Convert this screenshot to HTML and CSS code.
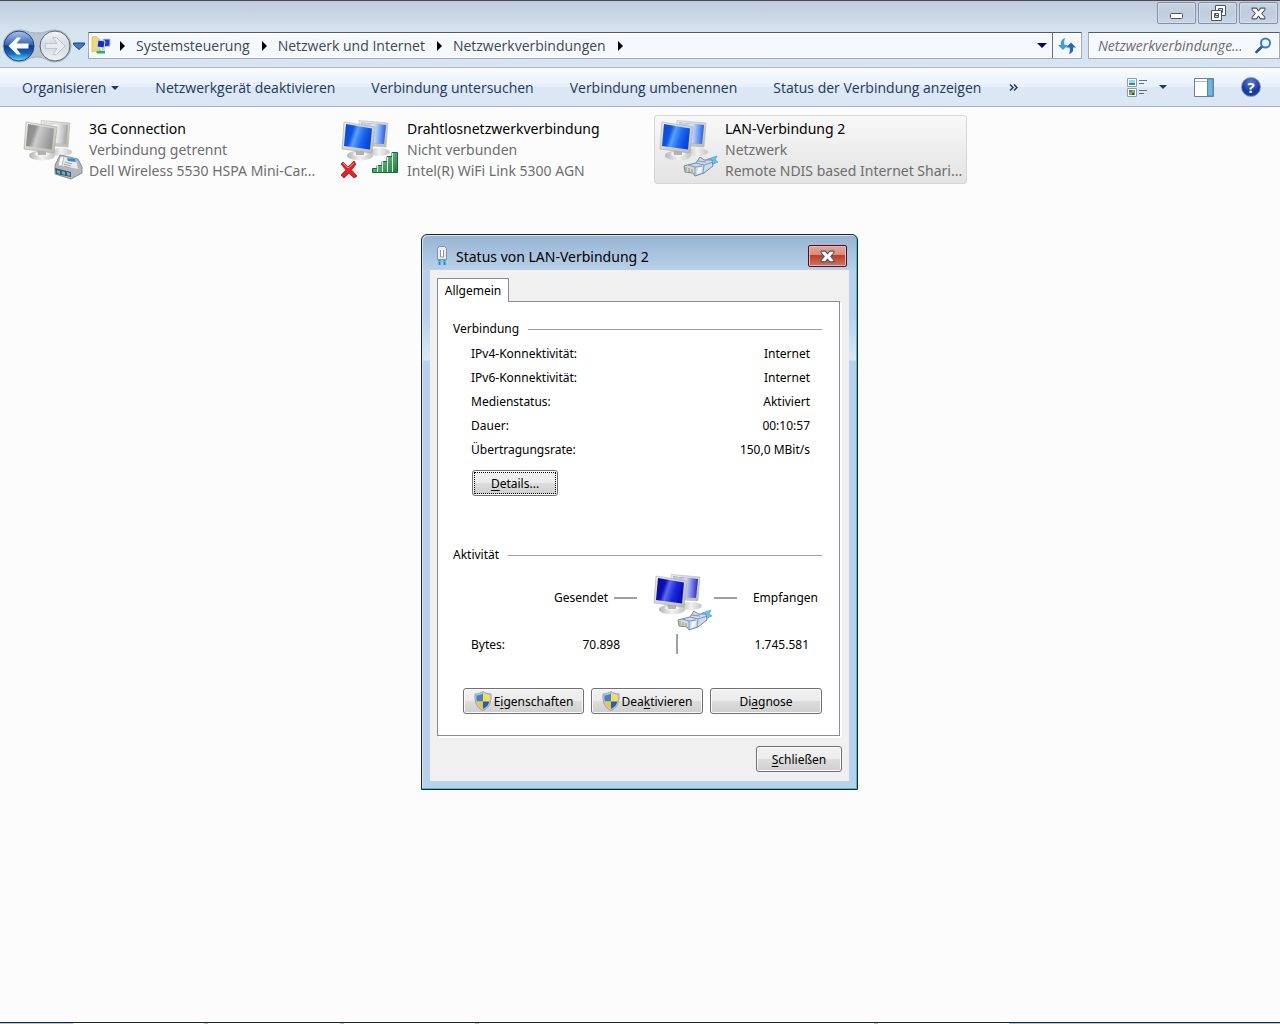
FILE: index.html
```html
<!DOCTYPE html>
<html lang="de">
<head>
<meta charset="UTF-8" />
<meta name="viewport" content="width=device-width, initial-scale=1" />
<title>Netzwerkverbindungen</title>
<link rel="stylesheet" href="styles.css">
</head>
<body>

<!-- Symbole, die mehrfach verwendet werden -->
<svg class="defs" width="0" height="0" aria-hidden="true">
  <defs>
    <linearGradient id="screen-blue" x1="0" y1="0" x2="1" y2=".3">
      <stop offset="0" stop-color="#1244c4" /><stop offset=".35" stop-color="#0f56e4" /><stop offset=".5" stop-color="#5aa0fa" /><stop offset=".75" stop-color="#1c68f0" /><stop offset="1" stop-color="#0846dc" />
    </linearGradient>
    <linearGradient id="screen-navy" x1="0" y1="0" x2="1" y2=".3">
      <stop offset="0" stop-color="#0a0f8c" /><stop offset=".35" stop-color="#0c12b0" /><stop offset=".5" stop-color="#5a6af0" /><stop offset=".75" stop-color="#1c28d8" /><stop offset="1" stop-color="#0a10bc" />
    </linearGradient>
    <linearGradient id="screen-gray" x1="0" y1="0" x2="1" y2=".3">
      <stop offset="0" stop-color="#868686" /><stop offset=".35" stop-color="#949494" /><stop offset=".5" stop-color="#cccccc" /><stop offset="1" stop-color="#969696" />
    </linearGradient>
    <linearGradient id="shine" x1="0" y1="0" x2="1" y2="0">
      <stop offset=".5" stop-color="#fff" stop-opacity=".75" /><stop offset="1" stop-color="#fff" stop-opacity=".1" />
    </linearGradient>
    <linearGradient id="frame" x1="0" y1="0" x2="1" y2="1">
      <stop offset="0" stop-color="#f0f0ec" /><stop offset="1" stop-color="#b9b8b2" />
    </linearGradient>
    <linearGradient id="base" x1="0" y1="0" x2="1" y2="0">
      <stop offset="0" stop-color="#b4b4b4" /><stop offset=".5" stop-color="#f2f2f2" /><stop offset="1" stop-color="#c4c4c4" />
    </linearGradient>
    <linearGradient id="green" x1="0" y1="0" x2="1" y2="1">
      <stop offset="0" stop-color="#8fd0a0" /><stop offset="1" stop-color="#1f7a40" />
    </linearGradient>
    <linearGradient id="ball" x1="0" y1="0" x2="0" y2="1">
      <stop offset="0" stop-color="#a9c4ea" /><stop offset=".45" stop-color="#3a68b8" /><stop offset=".5" stop-color="#0a3a90" /><stop offset=".75" stop-color="#1668c0" /><stop offset="1" stop-color="#5fe4fc" />
    </linearGradient>
    <linearGradient id="ball-off" x1="0" y1="0" x2="0" y2="1">
      <stop offset="0" stop-color="#f2f5f9" /><stop offset=".5" stop-color="#d3dae3" /><stop offset="1" stop-color="#f0f3f7" />
    </linearGradient>

    <symbol id="monitors" viewBox="0 0 60 60">
      <ellipse cx="39" cy="34" rx="11" ry="4" fill="url(#base)" />
      <path d="M19 2.500L48 5L46 29L20 27Z" fill="url(#frame)" stroke="#b5b5b0" stroke-width=".6" />
      <path d="M21 4.500L46 7L44 26L22 24Z" />
      <path d="M21 4.500L46 7L44 26L22 24Z" fill="url(#shine)" />
      <ellipse cx="20" cy="37.500" rx="13" ry="5" fill="url(#base)" />
      <ellipse cx="20" cy="36" rx="7" ry="2.500" fill="#f4f4f4" />
      <path d="M15 30L24 32L24 37L16 37Z" fill="#b2b2b2" />
      <path d="M4 4L35 9L32 35L2 31Z" fill="url(#frame)" stroke="#a7a7a2" stroke-width=".6" />
      <path d="M6 6L32 10.500L30 31.500L4 28Z" />
    </symbol>

    <symbol id="cable" viewBox="0 0 60 60">
      <path d="M45 45L50 41L59 38L57 42L60 44L53 47Z" fill="#6cc4e2" stroke="#3fa3cb" stroke-width=".7" />
      <path d="M26 48L38 45L42 39L46 42L54 42L55 48L46 55L37 58L35 55L27 54Z" fill="#cfdaeb" stroke="#6f87ab" />
      <path d="M38 45L46 47L55 44M46 47L45 55M39 43L48 44M30 47L37 49L37 57M37 49L44 48" fill="none" stroke="#8196b8" />
      <path d="M28 49V53M31 50V54M34 51V55" stroke="#b6b24c" stroke-width="1.500" />
      <path d="M40 50L44 49L43 54L39 56Z" fill="#f3f7fc" />
    </symbol>

    <symbol id="shield" viewBox="0 0 18 20">
      <path d="M9 .500C11 2 14 3 17 3C17.500 11 15.500 16.500 9 19.500C2.500 16.500 .500 11 1 3C4 3 7 2 9 .500Z" fill="#c9ced4" stroke="#8b949e" stroke-width=".8" />
      <path d="M9 2.500V10.500H2.700C2.300 8 2.400 6 2.500 4.300C5 4.200 7 3.600 9 2.500Z" fill="#3b86cc" />
      <path d="M9 2.500V10.500H15.300C15.700 8 15.600 6 15.500 4.300C13 4.200 11 3.600 9 2.500Z" fill="#fbdc53" />
      <path d="M2.700 10.500H9V18C5.500 16.300 3.400 14 2.700 10.500Z" fill="#f2c63a" />
      <path d="M15.300 10.500H9V18C12.500 16.300 14.600 14 15.300 10.500Z" fill="#1d62b4" />
    </symbol>

    <symbol id="cross" viewBox="0 0 14 12">
      <path d="M1 1H5L7 3.500L9 1H13V2.500L10 6L13 9.500V11H9L7 8.500L5 11H1V9.500L4 6L1 2.500Z" fill="#fff" stroke="#4d5468" stroke-linejoin="round" />
    </symbol>
  </defs>
</svg>

<div class="window">
  <header class="glass">
    <div class="window-controls">
      <button aria-label="Minimieren">
        <svg width="13" height="12"><rect x=".5" y="6.500" width="12" height="5" rx="1" fill="#fff" stroke="#4d5468" /></svg>
      </button>
      <button aria-label="Verkleinern">
        <svg width="16" height="16" fill="#fff" stroke="#4d5468"><path d="M5.500 .500H15.500V10.500H5.500ZM8.500 3.500V7.500H12.500V3.500Z" fill-rule="evenodd" /><path d="M1.500 5.500H11.500V15.500H1.500ZM4.500 8.500V12.500H8.500V8.500Z" fill-rule="evenodd" /></svg>
      </button>
      <button aria-label="Fenster schließen"><svg width="15" height="13"><use href="#cross" /></svg></button>
    </div>

    <div class="navigation">
      <div class="travel">
        <svg class="travel-bed" width="74" height="34" viewBox="0 0 74 34">
          <path d="M19 1C27 1 28 4 37 4S47 1 55 1A16 16 0 0 1 55 33C47 33 46 28 37 28S27 33 19 33A16 16 0 0 1 19 1Z" fill="#b8c5d5" stroke="#a3b0c0" />
        </svg>
        <button aria-label="Zurück">
          <svg width="32" height="32" viewBox="0 0 32 32"><circle cx="16" cy="16" r="15" fill="url(#ball)" stroke="#26436f" /><path d="M5.500 16L14 7.500H18L13.500 13.500H25.500V18.500H13.500L18 24.500H14Z" fill="#fff" /></svg>
        </button>
        <button aria-label="Vorwärts">
          <svg width="32" height="32" viewBox="0 0 32 32"><circle cx="16" cy="16" r="15" fill="url(#ball-off)" stroke="#5b6470" /><path d="M26 16L17.500 7.500H13.500L18 13.500H6.500V18.500H18L13.500 24.500H17.500Z" fill="#e9edf1" stroke="#bcc4ce" /></svg>
        </button>
        <button class="recent" aria-label="Zuletzt besucht">
          <svg width="12" height="8"><path d="M.5 1H11.500V2.500L6 7.500L.5 2.500Z" fill="#3c7fc0" stroke="#1c3f70" /></svg>
        </button>
      </div>

      <nav class="address" aria-label="Adresse">
        <svg class="folder" width="20" height="20" viewBox="0 0 20 20">
          <path d="M1 1L5 0L6 2L9 3V14L1 16Z" fill="#f0d878" stroke="#d2b34c" stroke-width=".6" />
          <path d="M12 3H19V10L13 11Z" fill="#1c3fd0" stroke="#c4cadc" />
          <path d="M7 4L14 5L13 12L6 11Z" fill="#1130c0" stroke="#d6dae6" />
          <path d="M5 15.500L9 14.500L14 15V17.500H6Z" fill="#39aa62" />
          <path d="M11 13L14 13.500" stroke="#c5c9d0" stroke-width="2" />
        </svg>
        <span class="crumb-arrow"></span>
        <a href="#">Systemsteuerung</a>
        <span class="crumb-arrow"></span>
        <a href="#">Netzwerk und Internet</a>
        <span class="crumb-arrow"></span>
        <a href="#">Netzwerkverbindungen</a>
        <span class="crumb-arrow"></span>
        <button class="history" aria-label="Vorherige Orte"><span class="down-arrow"></span></button>
        <button class="refresh" aria-label="Aktualisieren">
          <svg width="18" height="16" viewBox="0 0 18 16"><path d="M7.500 0C3 1.500 2.500 4 3 7H0L5 12L10 7H6.500C6 4.500 6 2 7.500 0Z" fill="#3aa0dc" /><path d="M11 16C15.500 14.500 15.500 12 15 9.500H18L13 4.500L8 9.500H11.500C12 12 12 14 11 16Z" fill="#2c66b8" /></svg>
        </button>
      </nav>

      <form class="search">
        <input type="search" aria-label="Netzwerkverbindungen durchsuchen" placeholder="Netzwerkverbindunge..." />
        <button aria-label="Suchen">
          <svg width="17" height="17" viewBox="0 0 17 17" fill="none"><path d="M1.500 15L7 9.500" stroke="#2c559c" stroke-width="2.600" stroke-linecap="round" /><circle cx="10.500" cy="6" r="4.500" fill="#eff8ff" stroke="#3b7cc4" stroke-width="2" /></svg>
        </button>
      </form>
    </div>
  </header>

  <div class="toolbar">
    <button>Organisieren<span class="down-arrow"></span></button>
    <button>Netzwerkgerät deaktivieren</button>
    <button>Verbindung untersuchen</button>
    <button>Verbindung umbenennen</button>
    <button>Status der Verbindung anzeigen</button>
    <button class="more" aria-label="Weitere Befehle">
      <svg width="9" height="7" fill="none" stroke="#1e395b" stroke-width="1.500"><path d="M1 .500L4 3.500L1 6.500M5 .500L8 3.500L5 6.500" /></svg>
    </button>
    <div class="toolbar-right">
      <button class="view" aria-label="Ansicht ändern">
        <svg width="20" height="19" viewBox="0 0 20 19"><path d="M.5 .500H9.500V8.500H.5ZM.5 10.500H9.500V18.500H.5Z" fill="#fff" stroke="#8d9bb0" /><path d="M2 2H8V5H2Z" fill="#9fd6ef" /><path d="M2 5H8V7H2Z" fill="#2f8f86" /><path d="M2 12H8V17H2Z" fill="#82b04a" /><path d="M2 12H5V14H2Z" fill="#6d62c4" /><path d="M5 15H7V17H5Z" fill="#27486e" /><path d="M12 2.500H20M12 5.500H17M12 12.500H20M12 15.500H17" stroke="#5c6f8c" /></svg>
        <span class="down-arrow"></span>
      </button>
      <button aria-label="Vorschaufenster">
        <svg width="20" height="19" viewBox="0 0 20 19"><path d="M.5 .500H19.500V18.500H.5Z" fill="#fff" stroke="#6d8196" /><path d="M1 3.500H14" stroke="#a9bccd" /><path d="M13.500 1H19V18H13.500Z" fill="#73b5d4" stroke="#4e8fb2" /></svg>
      </button>
      <button class="help" aria-label="Hilfe">?</button>
    </div>
  </div>

  <main class="connections">
    <a class="connection" href="#">
      <svg class="connection-icon gray" width="60" height="60" viewBox="0 0 60 60">
        <use href="#monitors" />
        <path d="M33 47L38 37L56 41L60 49V55L49 61L33 56Z" fill="#b4b8bd" stroke="#777d84" stroke-width=".8" />
        <path d="M39 38L54 42L56 51L36 47Z" fill="#e8eaed" />
        <path d="M45 40L53 41L54 44L46 43Z" fill="#258fe0" />
        <path d="M38 39L42 38L40 48L36 48Z" fill="#fafafa" stroke="#8f959c" stroke-width=".6" />
        <path d="M43 44L50 46M42 46L49 48M42 48L48 50" stroke="#9ea4ab" />
        <path d="M33 50L49 54V59L34 56Z" fill="#4d545c" />
        <path d="M35 52L38 53V56L35 55ZM40 53L43 54V57L40 56ZM45 54L48 55V58L45 57Z" fill="#53b4e6" />
      </svg>
      <span class="connection-text">
        <strong>3G Connection</strong>
        <span>Verbindung getrennt</span>
        <span>Dell Wireless 5530 HSPA Mini-Car...</span>
      </span>
    </a>
    <a class="connection" href="#">
      <svg class="connection-icon" width="60" height="60" viewBox="0 0 60 60">
        <use href="#monitors" />
        <path d="M32.500 54V50.500H37V47.500H42V43.500H47V38.500H52V34.500H57.500V54.500H32.500Z" fill="url(#green)" stroke="#17693a" />
        <path d="M37.500 47V54M42.500 43V54M47.500 39V54M52.500 35V54" stroke="#d5efdc" stroke-width="1" />
        <path d="M3 44L8 49L14 43L16 46L11.500 52L17 58L14 60L9 55L4 60L1 57L6 52L1 46Z" fill="#e32222" stroke="#b81414" stroke-width=".8" />
        <path d="M3 45L8 50L14 45" fill="none" stroke="#f79a9a" />
      </svg>
      <span class="connection-text">
        <strong>Drahtlosnetzwerkverbindung</strong>
        <span>Nicht verbunden</span>
        <span>Intel(R) WiFi Link 5300 AGN</span>
      </span>
    </a>
    <a class="connection selected" href="#">
      <svg class="connection-icon" width="60" height="60" viewBox="0 0 60 60">
        <use href="#monitors" />
        <use href="#cable" />
      </svg>
      <span class="connection-text">
        <strong>LAN-Verbindung 2</strong>
        <span>Netzwerk</span>
        <span>Remote NDIS based Internet Shari...</span>
      </span>
    </a>
  </main>

  <!-- Oberer Rand der Taskleiste -->
  <footer class="taskbar">
    <span></span><span></span><span></span><span class="wide"></span><span></span>
  </footer>
</div>

<section class="dialog" role="dialog" aria-labelledby="dialog-title">
  <header class="dialog-title">
    <svg width="12" height="20" viewBox="0 0 12 20">
      <path d="M1.500 2.500L3.500 .500H8.500L10.500 2.500V13.500H1.500Z" fill="#e8ecf2" stroke="#858fa2" />
      <path d="M4.500 4V11H7.500V4" fill="#fff" stroke="#8d95a5" />
      <path d="M3.500 14V19M8.500 14V19" stroke="#1d8fc0" stroke-width="2" />
      <path d="M3 15.500H9" stroke="#56c3e8" />
    </svg>
    <h1 id="dialog-title">Status von LAN-Verbindung 2</h1>
    <button class="close" aria-label="Schließen"><svg width="15" height="13"><use href="#cross" /></svg></button>
  </header>

  <div class="dialog-body">
    <div role="tablist"><button class="tab" role="tab" aria-selected="true">Allgemein</button></div>

    <div class="panel" role="tabpanel">
      <h2>Verbindung</h2>
      <table class="facts">
        <tr><th scope="row">IPv4-Konnektivität:</th><td>Internet</td></tr>
        <tr><th scope="row">IPv6-Konnektivität:</th><td>Internet</td></tr>
        <tr><th scope="row">Medienstatus:</th><td>Aktiviert</td></tr>
        <tr><th scope="row">Dauer:</th><td>00:10:57</td></tr>
        <tr><th scope="row">Übertragungsrate:</th><td>150,0 MBit/s</td></tr>
      </table>
      <button class="button details"><span><u>D</u>etails...</span></button>

      <h2>Aktivität</h2>
      <div class="activity">
        <span class="sent">Gesendet</span>
        <span class="dash"></span>
        <svg class="activity-icon" width="60" height="60" viewBox="0 0 60 60">
          <use href="#monitors" />
          <use href="#cable" />
        </svg>
        <span class="dash"></span>
        <span class="received">Empfangen</span>
      </div>
      <div class="bytes">
        <span>Bytes:</span>
        <span>70.898</span>
        <span class="divider"></span>
        <span>1.745.581</span>
      </div>

      <div class="actions">
        <button class="button wide"><svg width="18" height="20"><use href="#shield" /></svg><span>E<u>i</u>genschaften</span></button>
        <button class="button"><svg width="18" height="20"><use href="#shield" /></svg><span>Dea<u>k</u>tivieren</span></button>
        <button class="button"><span>Di<u>a</u>gnose</span></button>
      </div>
    </div>

    <div class="dialog-footer">
      <button class="button"><span><u>S</u>chließen</span></button>
    </div>
  </div>
</section>

</body>
</html>
```
FILE: styles.css
```css
/* --- Allgemein --- */
* {
  box-sizing: border-box;
}
body {
  margin: 0;
  font-family: "Open Sans", "Noto Sans", sans-serif;
  font-size: 14px;
  color: #000;
  background-color: #fcfcfc;
}
button {
  padding: 0;
  border: none;
  background: none;
  font: inherit;
  color: inherit;
}
a {
  color: inherit;
  text-decoration: none;
}
svg {
  display: block;
  flex-shrink: 0;
}
.defs {
  position: absolute;
}
.window {
  display: flex;
  flex-direction: column;
  min-height: 100vh;
}
.down-arrow {
  display: inline-block;
  border: 4px solid transparent;
  border-top-color: currentColor;
  border-bottom: none;
}

/* --- Titelleiste und Navigation --- */
.glass {
  border-top: 1px solid #4a4a50;
  border-bottom: 1px solid #b0bac8;
  background: linear-gradient(#bfcbda, #d7e4f2 32px);
}
.window-controls {
  display: flex;
  justify-content: flex-end;
  gap: 2px;
  padding: 1px 2px 0 0;
}
.window-controls button {
  display: flex;
  align-items: center;
  justify-content: center;
  width: 39px;
  height: 22px;
  border: 1px solid #8391aa;
  border-radius: 2px;
  background: linear-gradient(#c8d4e2, #bfccdc 50%, #c9d6e5);
  box-shadow: inset 0 0 0 1px #d3deea;
}
.navigation {
  display: flex;
  align-items: center;
  height: 43px;
  padding-left: 3px;
}
.travel {
  display: flex;
  align-items: center;
  gap: 4px;
  width: 85px;
  position: relative;
}
.travel-bed {
  position: absolute;
  left: -3px;
}
.travel button {
  position: relative;
}
.travel .recent {
  margin-left: -2px;
}
.address,
.search {
  display: flex;
  align-items: center;
  height: 27px;
  border: 1px solid #a0a9b5;
  border-top-color: #555b66;
  background-color: #f5f8fc;
  box-shadow: inset 0 0 0 1px #fff;
}
.address {
  flex: 1;
  color: #3f484f;
  padding-left: 2px;
  white-space: nowrap;
}
.folder {
  margin-right: 9px;
}
.crumb-arrow {
  border: 5px solid transparent;
  border-left-color: #000;
  border-right: none;
}
.address a {
  padding: 0 12px 0 11px;
}
.history {
  display: flex;
  margin-left: auto;
  padding: 0 5px;
  color: #000060;
}
.history .down-arrow {
  border-width: 5px;
  border-bottom: none;
}
.refresh {
  display: flex;
  align-items: center;
  justify-content: center;
  width: 29px;
  height: 100%;
  border-left: 1px solid #6a717c;
}
.search {
  width: 192px;
  margin-left: 6px;
  padding: 0 7px 0 9px;
}
.search input {
  flex: 1;
  min-width: 0;
  padding: 0;
  border: none;
  outline: none;
  background: none;
  font: italic 14px "Open Sans", "Noto Sans", sans-serif;
}
.search input::placeholder {
  color: #6d6d6d;
  opacity: 1;
}

/* --- Befehlsleiste --- */
.toolbar {
  display: flex;
  align-items: center;
  gap: 36px;
  height: 39px;
  padding: 0 19px 0 22px;
  border-bottom: 1px solid #a0afc3;
  background: linear-gradient(#fafcff, #e6f0fa 50%, #dce6f4 51%, #dce7f5);
  color: #1e395b;
  white-space: nowrap;
}
.toolbar .down-arrow {
  margin-left: 5px;
  vertical-align: 3px;
}
.more {
  margin-left: -8px;
}
.toolbar-right {
  display: flex;
  align-items: center;
  gap: 27px;
  margin-left: auto;
}
.view {
  display: flex;
  align-items: center;
}
.view .down-arrow {
  margin-left: 12px;
}
.help {
  width: 20px;
  height: 20px;
  border: 1px solid #8790a8;
  border-radius: 50%;
  background: radial-gradient(circle at 50% 25%, #5c80d8, #16389c 60%, #1a49c0);
  color: #fff;
  font-size: 15px;
  font-weight: bold;
  line-height: 18px;
}

/* --- Verbindungen --- */
.connections {
  flex: 1;
  display: grid;
  grid-template-columns: repeat(auto-fill, 313px);
  align-content: start;
  gap: 5px;
  padding: 8px 18px;
  font-family: "Noto Sans", sans-serif;
}
.connection {
  display: flex;
  gap: 7px;
  padding: 2px 3px;
  border: 1px solid transparent;
  border-radius: 3px;
  height: 69px;
}
.connection.selected {
  border-color: #d6d6d6;
  background: linear-gradient(#f8f8f8, #e3e3e3);
}
.connection-icon {
  overflow: visible;
  fill: url(#screen-blue);
}
.connection-icon.gray {
  fill: url(#screen-gray);
}
.connection-text {
  line-height: 21px;
  color: #6d6d6d;
  white-space: nowrap;
}
.connection-text > * {
  display: block;
}
.connection-text strong {
  font-weight: normal;
  color: #000;
}

/* --- Taskleiste --- */
.taskbar {
  display: flex;
  gap: 4px;
  height: 2px;
  padding: 0 271px 0 73px;
  border-top: 1px solid #1b2230;
  background-color: #b4c6dc;
}
.taskbar span {
  flex: 1;
  background-color: #fff;
}
.taskbar .wide {
  flex: 3;
}

/* --- Statusdialog --- */
.dialog {
  position: absolute;
  top: 234px;
  left: calc(50% - 219px);
  width: 437px;
  padding: 0 8px 8px;
  border: 1px solid #1c242c;
  border-radius: 6px 6px 0 0;
  background: linear-gradient(#98b4d2, #b9d1ea 36px, #b9d1ea 80px, #dce8f5 125px, #b9d1ea 126px);
  box-shadow: inset -1px -1px #35c5e0, inset 1px 1px #d5e4f3;
  font-family: "Noto Sans", sans-serif;
  font-size: 12px;
}
.dialog-title {
  display: flex;
  align-items: center;
  gap: 8px;
  height: 35px;
  padding: 7px 2px 0 6px;
}
.dialog-title h1 {
  flex: 1;
  margin: 0;
  font-size: 14px;
  font-weight: normal;
}
.close {
  display: flex;
  align-items: center;
  justify-content: center;
  width: 39px;
  height: 22px;
  border: 1px solid #4c1020;
  border-radius: 2px;
  background: linear-gradient(#e6a69c, #d98a7c 45%, #b83e28 46%, #cf7564);
  box-shadow: inset 0 0 0 1px #e8b8b0;
}
.dialog-body {
  padding: 8px 7px 9px;
  background-color: #f0f0f0;
}
.tab {
  display: block;
  position: relative;
  width: 72px;
  height: 24px;
  margin-bottom: -1px;
  border: 1px solid #898c95;
  border-bottom: none;
  background-color: #fff;
}
.panel {
  margin-right: 2px;
  padding: 15px 17px 21px 15px;
  border: 1px solid #898c95;
  background-color: #fff;
  box-shadow: 2px 2px #fff;
}
.panel h2 {
  display: flex;
  align-items: center;
  gap: 9px;
  margin: 0;
  font-size: 12px;
  font-weight: normal;
  line-height: 24px;
}
.panel h2::after {
  content: "";
  flex: 1;
  height: 1px;
  background-color: #a0a0a0;
}
.facts {
  width: 100%;
  border-collapse: collapse;
}
.facts th,
.facts td {
  height: 24px;
  padding: 0 12px 0 18px;
  font-weight: normal;
  text-align: left;
}
.facts td {
  text-align: right;
}

/* Schaltflächen im Dialog */
.button {
  display: flex;
  align-items: center;
  justify-content: center;
  gap: 2px;
  width: 86px;
  height: 26px;
  border: 1px solid #707070;
  border-radius: 3px;
  background: linear-gradient(#f2f2f2, #ebebeb 50%, #dddddd 51%, #cfcfcf);
  box-shadow: inset 0 0 0 1px #fafafa;
}
.button u {
  text-underline-offset: 2px;
}
.details {
  margin: 9px 0 47px 19px;
  outline: 1px dotted #000;
  outline-offset: -3px;
}

/* Aktivität */
.activity {
  display: grid;
  grid-template-columns: 161px 23px 77px 23px 1fr;
  grid-template-rows: 61px;
  align-items: center;
}
.sent {
  padding-right: 6px;
  text-align: right;
}
.received {
  padding-right: 4px;
  text-align: right;
}
.dash {
  height: 2px;
  background-color: #a0a0a0;
}
.activity-icon {
  align-self: end;
  margin: 0 0 -4px 15px;
  overflow: visible;
  fill: url(#screen-navy);
}
.bytes {
  display: grid;
  grid-template-columns: 75px 74px 114px 1fr;
  align-items: center;
  height: 32px;
  padding: 0 13px 0 18px;
}
.bytes span {
  text-align: right;
}
.bytes span:first-child {
  text-align: left;
}
.divider {
  justify-self: center;
  width: 2px;
  height: 20px;
  background-color: #a0a0a0;
}
.actions {
  display: flex;
  justify-content: flex-end;
  gap: 7px;
  margin-top: 28px;
}
.actions .button {
  width: 112px;
}
.actions .wide {
  width: 121px;
}
.dialog-footer {
  display: flex;
  justify-content: flex-end;
  margin-top: 10px;
}
```
